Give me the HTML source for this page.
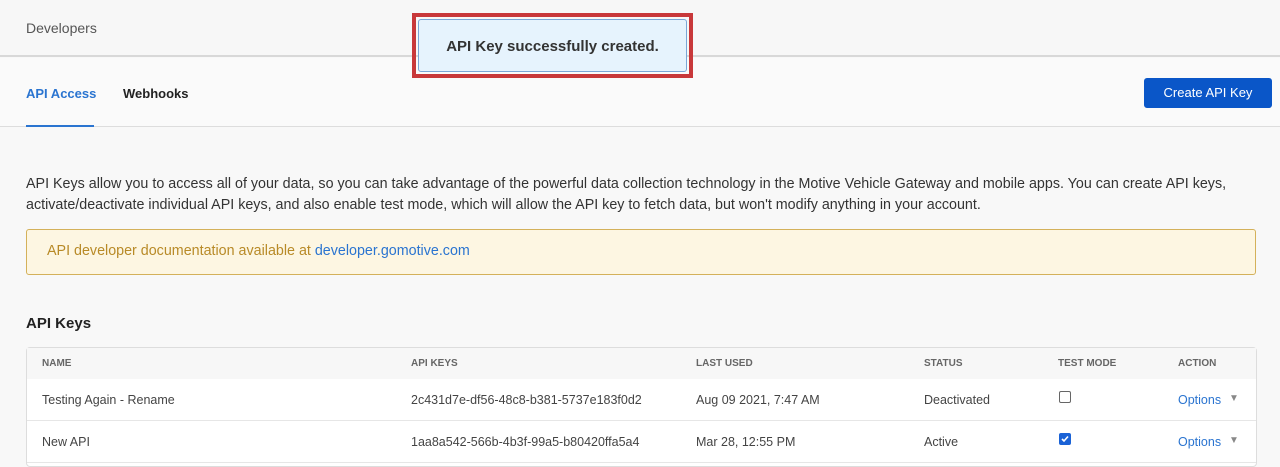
<!DOCTYPE html>
<html><head><style>
*{box-sizing:border-box;margin:0;padding:0}
body{width:1280px;height:455px;overflow:hidden;background:#f8f8f8;font-family:"Liberation Sans",sans-serif;color:#333;position:relative}
.hdr{position:absolute;left:0;top:0;width:1280px;height:57px;background:#f7f7f7;border-bottom:2px solid #d8d8d8}
.hdr span{position:absolute;left:26px;top:20px;font-size:14px;color:#555}
.tabs{position:absolute;left:0;top:58px;width:1280px;height:69px;background:#fafafa;border-bottom:1px solid #ddd}
.tab{position:absolute;top:28px;font-size:13px;font-weight:bold;white-space:nowrap}
.t1{left:26px;color:#2a74d0;height:41px;border-bottom:2px solid #2a74d0;width:68px}
.t2{left:123px;color:#222}
.btn{position:absolute;left:1144px;top:78px;width:128px;height:30px;background:#0a56c8;border-radius:3px;color:#fff;font-size:13px;text-align:center;line-height:30px}
.toast{position:absolute;left:412px;top:13px;width:281px;height:65px;border:4px solid #c8383a}
.toast div{position:absolute;left:2px;top:2px;width:269px;height:53px;background:#e6f3fd;border:1px solid #7aa6d6;border-radius:3px;text-align:center;line-height:53px;font-weight:bold;font-size:15px;color:#333}
p{position:absolute;left:26px;top:174px;width:1240px;font-size:14.3px;line-height:21px;color:#333}
.warn{position:absolute;left:26px;top:229px;width:1230px;height:46px;background:#fdf6e2;border:1px solid #d4b15a;border-radius:3px;font-size:14.3px;color:#b88a27;padding:13px 20px}
.warn a{color:#2a74d0;text-decoration:none}
h3{position:absolute;left:26px;top:315px;font-size:15px;font-weight:bold;color:#222}
.tbl{position:absolute;left:26px;top:347px;width:1231px;height:120px;border:1px solid #ddd;border-radius:4px;background:#fff}
.th{position:absolute;top:0;height:31px;width:100%;background:#f7f7f7;font-size:10px;font-weight:bold;color:#666}
.c{position:absolute;white-space:nowrap}
.th .c{top:10px}
.r{position:absolute;left:0;width:100%;height:42px;font-size:12.5px;color:#444;border-bottom:1px solid #e6e6e6}
.r .c{top:14px}
.opt{color:#2a74d0}
.arr{color:#888;font-size:10px}
.cb{position:absolute;width:12px;height:12px;border:1px solid #666;border-radius:2px;top:12px}
.cb.on{background:#1a62d6;border-color:#1a62d6}
</style></head><body>
<div class="hdr"><span>Developers</span></div>
<div class="tabs"><div class="tab t1">API Access</div><div class="tab t2">Webhooks</div></div>
<div class="btn">Create API Key</div>
<div class="toast"><div>API Key successfully created.</div></div>
<p>API Keys allow you to access all of your data, so you can take advantage of the powerful data collection technology in the Motive Vehicle Gateway and mobile apps. You can create API keys, activate/deactivate individual API keys, and also enable test mode, which will allow the API key to fetch data, but won't modify anything in your account.</p>
<div class="warn">API developer documentation available at <a>developer.gomotive.com</a></div>
<h3>API Keys</h3>
<div class="tbl">
<div class="th"><span class="c" style="left:15px">NAME</span><span class="c" style="left:384px">API KEYS</span><span class="c" style="left:669px">LAST USED</span><span class="c" style="left:897px">STATUS</span><span class="c" style="left:1031px">TEST MODE</span><span class="c" style="left:1151px">ACTION</span></div>
<div class="r" style="top:31px"><span class="c" style="left:15px">Testing Again - Rename</span><span class="c" style="left:384px">2c431d7e-df56-48c8-b381-5737e183f0d2</span><span class="c" style="left:669px">Aug 09 2021, 7:47 AM</span><span class="c" style="left:897px">Deactivated</span><span class="cb" style="left:1032px"></span><span class="c opt" style="left:1151px">Options</span><span class="c arr" style="left:1202px">▼</span></div>
<div class="r" style="top:73px"><span class="c" style="left:15px">New API</span><span class="c" style="left:384px">1aa8a542-566b-4b3f-99a5-b80420ffa5a4</span><span class="c" style="left:669px">Mar 28, 12:55 PM</span><span class="c" style="left:897px">Active</span><span class="cb on" style="left:1032px"><svg width="10" height="10" viewBox="0 0 10 10" style="position:absolute;left:0;top:0"><path d="M2 5l2 2 4-4.5" stroke="#fff" stroke-width="1.6" fill="none"/></svg></span><span class="c opt" style="left:1151px">Options</span><span class="c arr" style="left:1202px">▼</span></div>
</div>
</body></html>
